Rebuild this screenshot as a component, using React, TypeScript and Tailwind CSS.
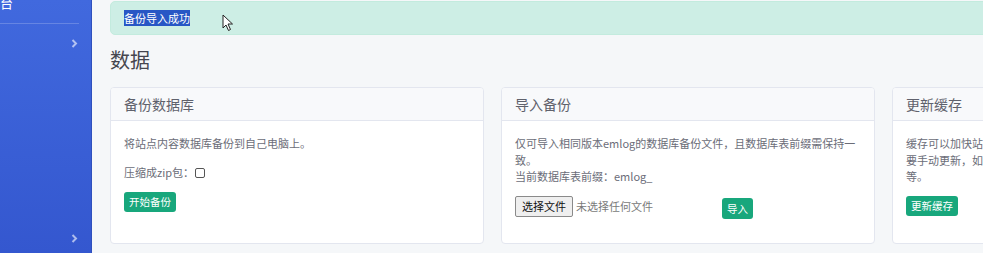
const Chevron = () => (
    <svg width="7" height="9" viewBox="0 0 7 9" className="text-white/60">
        <path d="M1.5 1 L5 4.5 L1.5 8" fill="none" stroke="currentColor" strokeWidth="2" />
    </svg>
);

const Cursor = () => (
    <svg width="12" height="18" viewBox="0 0 12 18" className="absolute left-[130px] top-[14px]">
        <path d="M1 1 L1 14 L4 11 L6.5 16.5 L8.5 15.5 L6 10 L10.5 10 Z" fill="#fff" stroke="#222" strokeWidth="1" strokeLinejoin="round" />
    </svg>
);

const App = () => {
    return (
        <div className="flex h-[253px] w-[983px] overflow-hidden bg-[#f5f7f9] font-['Noto_Sans_CJK_SC',sans-serif]">
            {/* Sidebar */}
            <aside className="flex w-[92px] shrink-0 flex-col border-r border-[#2f50bd] bg-gradient-to-b from-[#4169de] to-[#3457cf]">
                <div className="h-[23px] overflow-hidden">
                    <span className="-mt-[6px] ml-[-26px] block text-[13px] leading-[18px] text-white">控制台</span>
                </div>
                <div className="mr-[12px] h-px bg-white/20" />
                <div className="flex h-[38px] items-center justify-end pr-[13px]">
                    <Chevron />
                </div>
                <div className="flex-1" />
                <div className="flex h-[30px] items-center justify-end pr-[13px]">
                    <Chevron />
                </div>
            </aside>

            {/* Content */}
            <main className="relative w-[1180px] shrink-0 pl-[18px] pt-px">
                <div className="flex h-[34px] items-center rounded-[5px] border border-[#c3ebde] bg-[#cdeee5] pl-[13px]">
                    <span className="bg-[#2857c5] text-[11px] leading-[16px] text-white">备份导入成功</span>
                </div>
                <Cursor />

                <h1 className="mt-[13px] text-[20px] leading-[24px] text-[#45464f]">数据</h1>

                {/* Container */}
                <div className="mt-[15px] grid w-[1156px] grid-cols-3 gap-[17px] text-[11px] text-[#6b6d78]">
                    {/* Backup */}
                    <article className="h-[157px] overflow-hidden rounded-[4px] border border-[#e3e6ef] bg-white">
                        <div className="flex h-[33px] items-center border-b border-[#e3e6ef] bg-[#f8f9fb] px-[13px] text-[14px] text-[#5f616c]">
                            备份数据库
                        </div>
                        <div className="px-[13px] pt-[14px] leading-[17px]">
                            <p>将站点内容数据库备份到自己电脑上。</p>
                            <div className="mt-[12px] flex items-center">
                                压缩成zip包：
                                <span className="ml-px inline-block h-[10px] w-[10px] rounded-[2px] border border-[#555]" />
                            </div>
                            <button className="mt-[11px] h-[20px] rounded-[3px] bg-[#18a77c] px-[5px] text-[10.5px] leading-[20px] text-white">
                                开始备份
                            </button>
                        </div>
                    </article>

                    {/* Import */}
                    <article className="h-[157px] overflow-hidden rounded-[4px] border border-[#e3e6ef] bg-white">
                        <div className="flex h-[33px] items-center border-b border-[#e3e6ef] bg-[#f8f9fb] px-[13px] text-[14px] text-[#5f616c]">
                            导入备份
                        </div>
                        <div className="px-[13px] pt-[14px] leading-[16.5px]">
                            <p>仅可导入相同版本emlog的数据库备份文件，且数据库表前缀需保持一致。</p>
                            <p>当前数据库表前缀：emlog_</p>
                            <div className="mt-[10px] flex items-center">
                                <div className="flex w-[200px] items-center">
                                    <span className="h-[21px] rounded-[2px] border border-[#8a8a8a] bg-[#efefef] px-[6px] leading-[19px] text-[#111]">
                                        选择文件
                                    </span>
                                    <span className="ml-[3px] text-[#7a7a7a]">未选择任何文件</span>
                                </div>
                                <button className="ml-[7px] mt-[3px] h-[21px] rounded-[3px] bg-[#18a77c] px-[5px] text-[10.5px] leading-[21px] text-white">
                                    导入
                                </button>
                            </div>
                        </div>
                    </article>

                    {/* Cache */}
                    <article className="h-[157px] overflow-hidden rounded-[4px] border border-[#e3e6ef] bg-white">
                        <div className="flex h-[33px] items-center border-b border-[#e3e6ef] bg-[#f8f9fb] px-[13px] text-[14px] text-[#5f616c]">
                            更新缓存
                        </div>
                        <div className="px-[13px] pt-[14px] leading-[16.5px]">
                            <p>缓存可以加快站点的加载速度，通常系统会自动更新，特殊情况下则需要手动更新，如：缓存文件被修改、手动修改了数据库、页面显示异常等。</p>
                            <button className="mt-[11px] h-[20px] rounded-[3px] bg-[#18a77c] px-[5px] text-[10.5px] leading-[20px] text-white">
                                更新缓存
                            </button>
                        </div>
                    </article>
                </div>
            </main>
        </div>
    );
};

export default App;
